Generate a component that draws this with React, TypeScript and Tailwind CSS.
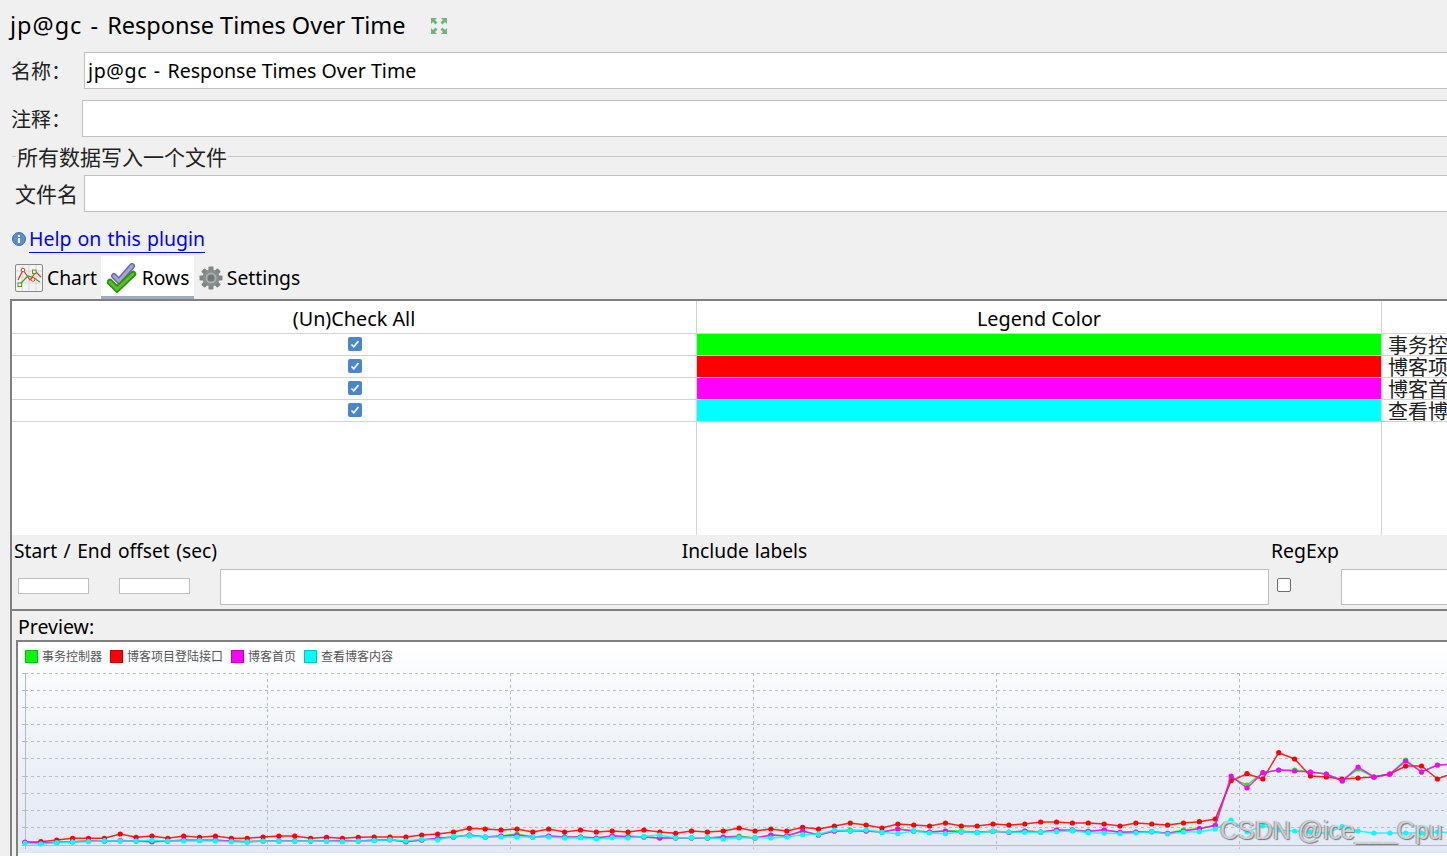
import React from 'react';

const uiFont = '[font-family:"Noto_Sans","Noto_Sans_CJK_SC",sans-serif]';
const cjkFont = '[font-family:"Noto_Sans_CJK_SC",sans-serif]';

// y position of each sample, one point every 15.87px starting at x=25
const red = [
  842.3, 841.7, 840, 838.3, 838.3, 838.3, 834, 837.3, 836, 838.3, 836, 837.3, 836, 838.3, 838.3, 837, 836, 836, 838.3, 837.3, 838.3, 837.3, 837, 837,
  837, 835, 834, 832, 828.3, 829, 830, 829, 832, 829, 832, 830, 832, 831, 832, 830, 832, 833.3, 831, 832, 831, 828, 831, 829, 831,
  827.3, 829, 826, 823, 825, 828, 824, 825, 826, 823, 826, 826, 824, 825, 824, 822, 822, 823, 823, 824, 826, 823, 824,
  825, 823, 821.7, 819, 780.7, 773.7, 779, 752.7, 759, 776, 777, 779, 778, 777, 774, 766, 766, 779, 773,
];
const magenta = [
  842.3, 843.3, 842.3, 841.7, 841, 841, 840.7, 841, 841.7, 841, 840.3, 840.3, 840.3, 841, 841.7, 841, 841, 841, 841, 841, 841, 841, 840.3, 839.7,
  841.7, 840, 838.3, 837, 835, 837, 836, 835, 837, 836, 837, 837, 838, 836, 837, 837, 838, 838, 838, 838, 837, 837, 838, 835, 836,
  831, 835, 831, 831, 831, 832, 829, 831, 832, 831, 832, 832.3, 831.3, 832.3, 831, 832, 830, 830.7, 831.3, 830, 832.3, 832, 831.7,
  833.3, 831, 828.7, 825.3, 776, 788, 772.7, 770, 771, 772, 774, 781, 767, 777, 774, 761, 772, 765, 764,
];
const cyan = [
  843.3, 844, 842.7, 842, 841.7, 840.7, 841, 841, 840.3, 841, 841, 840.7, 841, 841.7, 842, 841, 841.3, 841.3, 841, 841.3, 841.7, 841, 840.7, 839.7,
  841, 839.3, 840, 836.3, 835.7, 837, 837, 837, 837, 837, 838, 837.7, 839, 837.7, 838, 836.3, 835, 838, 837.7, 837.7, 839, 837.7, 837.7, 838, 837,
  834.7, 834.3, 830, 831, 830, 832.3, 833.7, 830.7, 833, 833.7, 831.7, 832.7, 831.3, 832, 832.3, 832, 831.7, 830.7, 832.7, 833, 833.7, 833, 831.7,
  834, 832, 831.7, 829, 820, 831.7, 826, 830, 831, 832, 833.3, 826.7, 831, 833, 833, 833, 833, 832, 833,
];
const green = magenta.map((y, i) => (i === 76 ? 778 : i === 77 ? 785 : i === 84 ? 769 : i > 24 && i % 7 === 3 ? y - 1 : y));

const xOf = (i: number) => 25 + i * 15.87;
const gridY = [673.5, 690.5, 707.5, 724.5, 741.5, 758.5, 776.5, 793.5, 810.5, 827.5];
const gridX = [267.5, 510.5, 753.5, 996.5, 1239.5];

const series = [
  { color: '#00ff00', data: green },
  { color: '#ff0000', data: red },
  { color: '#ff00ff', data: magenta },
  { color: '#00ffff', data: cyan },
];

const legend = [
  { color: 'bg-[#00ff00] border-[#00c000]', label: '事务控制器' },
  { color: 'bg-[#ff0000] border-[#c00000]', label: '博客项目登陆接口' },
  { color: 'bg-[#ff00ff] border-[#c000c0]', label: '博客首页' },
  { color: 'bg-[#00ffff] border-[#00c0c0]', label: '查看博客内容' },
];

const rows = [
  { color: 'bg-[#00ff00]', label: '事务控制器' },
  { color: 'bg-[#ff0000]', label: '博客项目登陆接口' },
  { color: 'bg-[#ff00ff]', label: '博客首页' },
  { color: 'bg-[#00ffff]', label: '查看博客内容' },
];

const ExpandIcon = () => (
  <svg width="18" height="18" viewBox="0 0 18 18">
    <g fill="#6db578">
      <path d="M1 1h6L5 3l2.5 2.5-2 2L3 5 1 7z" />
      <path d="M17 1v6l-2-2-2.5 2.5-2-2L13 3l-2-2z" />
      <path d="M1 17v-6l2 2 2.5-2.5 2 2L5 15l2 2z" />
      <path d="M17 17h-6l2-2-2.5-2.5 2-2L15 13l2-2z" />
    </g>
  </svg>
);

const InfoIcon = () => (
  <svg width="14" height="14" viewBox="0 0 14 14">
    <circle cx="7" cy="7" r="6.5" fill="#5b8fcb" stroke="#3f6ea8" strokeWidth="1" />
    <rect x="6" y="3" width="2" height="2" fill="#fff" />
    <rect x="6" y="6" width="2" height="5" fill="#fff" />
  </svg>
);

const ChartIcon = () => (
  <svg width="28" height="28" viewBox="0 0 28 28">
    <rect x="0.5" y="0.5" width="27" height="27" rx="1.5" fill="#f4f4f4" stroke="#8a8a8a" />
    <path d="M1 7h26M1 13h26M1 19h26M7 1v26M14 1v26M21 1v26" stroke="#d8d8d8" fill="none" />
    <path d="M3 16L8 6l7 10 6-8 5 5" stroke="#d0402a" strokeWidth="1.2" fill="none" />
    <path d="M4 21l9-9 6 2 6 4" stroke="#4c9a1e" strokeWidth="1.2" fill="none" />
    <rect x="3" y="19" width="3.5" height="3.5" fill="#fff" stroke="#4c9a1e" />
    <rect x="17.5" y="6" width="3.5" height="3.5" fill="#fff" stroke="#4c9a1e" />
    <circle cx="8" cy="6" r="1.8" fill="#fff" stroke="#d0402a" />
    <circle cx="18" cy="15.5" r="1.8" fill="#fff" stroke="#d0402a" />
  </svg>
);

const RowsIcon = () => (
  <svg width="30" height="30" viewBox="0 0 30 30">
    <path d="M7 13l5 5L25 3" stroke="#6c6ca8" strokeWidth="6" fill="none" strokeLinecap="round" />
    <path d="M7 13l5 5L25 3" stroke="#a4a4d4" strokeWidth="3" fill="none" strokeLinecap="round" />
    <path d="M3 19l7 7L26 11" stroke="#2f8f14" strokeWidth="6.5" fill="none" strokeLinecap="round" />
    <path d="M3 19l7 7L26 11" stroke="#58c02c" strokeWidth="3" fill="none" strokeLinecap="round" />
  </svg>
);

const GearIcon = () => (
  <svg width="24" height="24" viewBox="0 0 24 24">
    <g fill="#7d8585">
      {[0, 45, 90, 135, 180, 225, 270, 315].map((a) => (
        <rect key={a} x="9.5" y="0.5" width="5" height="5" rx="0.8" transform={`rotate(${a} 12 12)`} />
      ))}
    </g>
    <circle cx="12" cy="12" r="8.5" fill="#858d8d" />
    <circle cx="12" cy="12" r="5.5" fill="#a9afaf" />
    <circle cx="12" cy="12" r="3.6" fill="#6f7777" />
  </svg>
);

const CheckedBox = () => (
  <span className="flex h-[14px] w-[14px] items-center justify-center rounded-[2px] bg-[#4a86c8]">
    <svg width="10" height="10" viewBox="0 0 10 10">
      <path d="M1.5 5.5l2.3 2.3L8.5 2" stroke="#fff" strokeWidth="1.7" fill="none" />
    </svg>
  </span>
);

const Field = ({ className = '' }: { className?: string }) => (
  <input readOnly value="" className={`border border-[#bfbfbf] bg-white px-[3px] outline-none ${className}`} />
);

const TableColumn = ({ title, className, children }: { title?: string; className: string; children: React.ReactNode }) => (
  <div className={`flex shrink-0 flex-col ${className}`}>
    <div className="flex h-[33px] items-center justify-center border-b border-[#d4d4d4] pt-[3px] text-[19.8px]">{title}</div>
    {children}
  </div>
);

const Chart = () => (
  <svg width="1429" height="181" viewBox="18 672 1429 181" className="block">
    {gridY.map((y) => (
      <line key={y} x1="25" x2="1447" y1={y} y2={y} stroke="#b8bcc8" strokeDasharray="3 3" />
    ))}
    {gridX.map((x) => (
      <line key={x} x1={x} x2={x} y1="673" y2="849" stroke="#b8bcc8" strokeDasharray="3 3" />
    ))}
    {gridY.map((y) => (
      <line key={y} x1="22" x2="25" y1={y} y2={y} stroke="#b4bac6" />
    ))}
    <line x1="25.5" x2="25.5" y1="673" y2="849" stroke="#b4bac6" />
    <line x1="22" x2="1447" y1="845.5" y2="845.5" stroke="#b4bac6" />
    {series.map((s) => (
      <g key={s.color}>
        <polyline
          points={s.data.map((y, i) => `${xOf(i)},${y}`).join(' ')}
          fill="none"
          stroke={s.color}
          strokeWidth="1.5"
          strokeOpacity="0.85"
        />
        {s.data.map((y, i) => (
          <circle key={i} cx={xOf(i)} cy={y} r="2.6" fill={s.color} />
        ))}
      </g>
    ))}
  </svg>
);

export default function App() {
  return (
    <div className={`h-[856px] w-[1447px] overflow-hidden bg-[#f0f0f0] text-[#000] ${uiFont}`}>
      <div className="flex h-[52px] items-center gap-[24px] pl-[10px]">
        <span className="text-[23.5px]">
          <span className="tracking-[1px] [word-spacing:1px]">jp@gc - </span>Response Times Over Time
        </span>
        <ExpandIcon />
      </div>

      <div className="flex h-[37px] items-center">
        <span className={`w-[84px] pl-[11px] text-[20px] text-[#222] ${cjkFont}`}>名称：</span>
        <div className="mr-[-10px] flex h-full flex-1 items-center border border-[#bfbfbf] bg-white px-[3px] text-[19.6px]">
          <span>
            <span className="tracking-[0.6px] [word-spacing:1px]">jp@gc - </span>Response Times Over Time
          </span>
        </div>
      </div>

      <div className="mt-[11px] flex h-[37px] items-center">
        <span className={`w-[82px] pl-[11px] text-[20px] text-[#222] ${cjkFont}`}>注释：</span>
        <Field className="mr-[-10px] h-full flex-1" />
      </div>

      <div className="flex h-[38px] items-center pl-[12px] pt-[1px]">
        <span className="h-px w-[4px] bg-[#c8c8c8]" />
        <span className={`px-px text-[21px] text-[#222] ${cjkFont}`}>所有数据写入一个文件</span>
        <span className="h-px flex-1 bg-[#c8c8c8]" />
      </div>

      <div className="flex h-[37px] items-center">
        <span className={`w-[84px] pl-[15px] text-[21px] text-[#222] ${cjkFont}`}>文件名</span>
        <Field className="mr-[-10px] h-full flex-1" />
      </div>

      <div className="flex h-[44px] items-center gap-[3px] pl-[12px] pt-[10px]">
        <InfoIcon />
        <span className="border-b border-[#0000ff] pb-[1px] pt-[1px] text-[19.5px] leading-[24px] text-[#0000ff] [word-spacing:1px]">
          Help on this plugin
        </span>
      </div>

      <div className="flex h-[43px] items-stretch pl-[15px] text-[19.3px]">
        <div className="flex items-center gap-[4px] pr-[4px]">
          <ChartIcon />
          <span className="pt-[2px]">Chart</span>
        </div>
        <div className="flex w-[93px] items-center gap-[5px] border-b-[3px] border-[#a0abc0] bg-white pl-[6px] pt-[4px]">
          <RowsIcon />
          <span>Rows</span>
        </div>
        <div className="flex items-center gap-[4px] pl-[5px]">
          <GearIcon />
          <span className="pt-[2px]">Settings</span>
        </div>
      </div>

      <div className="ml-[10px] w-[1480px] border-l-2 border-[#808080]">
        <div className="flex h-[236px] border-t-2 border-[#808080] bg-white">
          <TableColumn title="(Un)Check All" className="w-[685px] border-r border-[#d4d4d4]">
            {rows.map((r) => (
              <div key={r.label} className="flex h-[22px] items-center justify-center border-b border-[#d4d4d4] pb-[2px] pl-[2px]">
                <CheckedBox />
              </div>
            ))}
          </TableColumn>
          <TableColumn title="Legend Color" className="w-[685px] border-r border-[#d4d4d4]">
            {rows.map((r) => (
              <div key={r.label} className="h-[22px] border-b border-[#d4d4d4]">
                <div className={`h-full ${r.color}`} />
              </div>
            ))}
          </TableColumn>
          <TableColumn className="w-[108px]">
            {rows.map((r) => (
              <div
                key={r.label}
                className={`h-[22px] overflow-hidden whitespace-nowrap border-b border-[#d4d4d4] pl-[6px] text-[20px] leading-[22px] text-[#222] ${cjkFont}`}
              >
                {r.label}
              </div>
            ))}
          </TableColumn>
        </div>

        <div className="flex h-[74px]">
          <div className="flex w-[208px] shrink-0 flex-col">
            <div className="flex h-[34px] items-center pb-[2px] pl-[2px] text-[19.2px] [word-spacing:1.5px]">Start / End offset (sec)</div>
            <div className="flex h-[36px] items-start gap-[30px] pl-[6px] pt-[9px]">
              <Field className="h-[16px] w-[71px]" />
              <Field className="h-[16px] w-[71px]" />
            </div>
          </div>
          <div className="flex w-[1049px] shrink-0 flex-col">
            <div className="flex h-[34px] items-center justify-center pb-[2px] text-[19.2px] [word-spacing:1px]">Include labels</div>
            <Field className="h-[36px] w-full" />
          </div>
          <div className="flex w-[72px] shrink-0 flex-col">
            <div className="flex h-[34px] items-center pb-[2px] pl-[2px] text-[19.4px]">RegExp</div>
            <div className="flex h-[36px] items-start pl-[8px] pt-[9px]">
              <span className="h-[14px] w-[14px] rounded-[2px] border border-[#707070] bg-white" />
            </div>
          </div>
          <div className="flex flex-1 flex-col pt-[34px]">
            <Field className="h-[36px] w-full" />
          </div>
        </div>

        <div className="border-t-2 border-[#808080]">
          <div className="flex h-[29px] items-center pl-[6px] pt-[2px] text-[19.5px]">Preview:</div>
          <div className="relative ml-[4px] border-l-2 border-t-2 border-[#808080] bg-white pb-[3px]">
            <div className="bg-gradient-to-b from-[#ffffff] via-[#eef2f9] to-[#e3e9f4]">
              <div className="flex h-[30px] items-center gap-[8px] pb-[2px] pl-[7px] text-[12px] text-[#555]">
                {legend.map((l) => (
                  <div key={l.label} className="flex items-center gap-[4px]">
                    <span className={`h-[13px] w-[13px] border ${l.color}`} />
                    <span className={cjkFont}>{l.label}</span>
                  </div>
                ))}
              </div>
              <Chart />
            </div>
            <span className="absolute left-[1202px] top-[170px] whitespace-nowrap text-[25px] leading-[36px] text-[#e8ebf0bb] [font-family:'Liberation_Sans',sans-serif] [text-shadow:1px_1px_1px_#777,-1px_0_1px_#999]">
              CSDN @ice___Cpu
            </span>
          </div>
        </div>
      </div>
    </div>
  );
}
